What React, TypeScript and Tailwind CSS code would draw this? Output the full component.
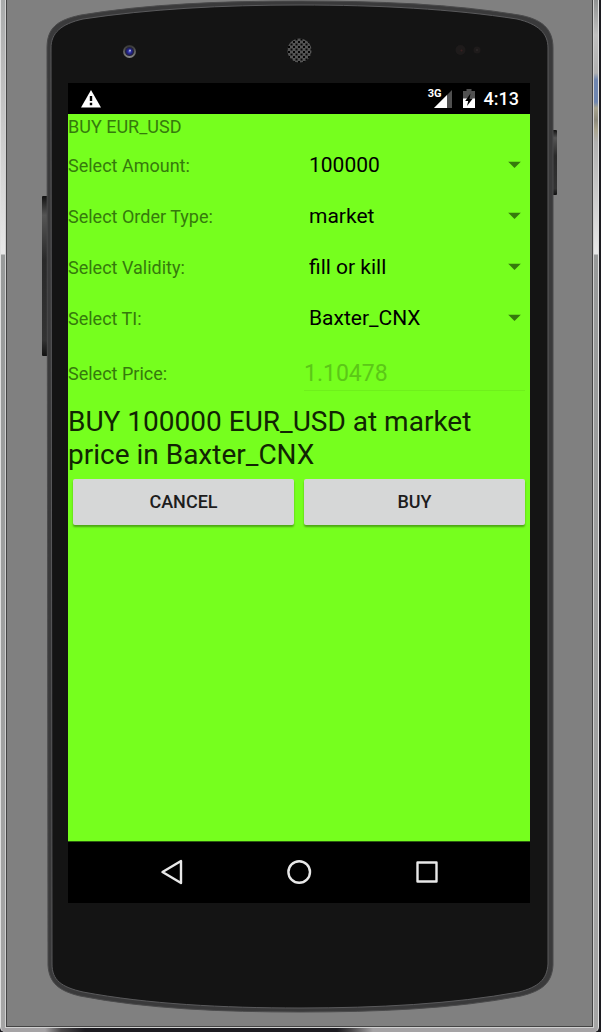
import React from "react";

const body =
  "M0 48 C0 28 10 20 34 15 C100 4 175 1 253 1 C331 1 406 4 472 15 C494 19 506 28 506 48 L506 965 C505 983 495 991 474 996 C406 1009 330 1012 253 1012 C176 1012 100 1009 33 996 C12 991 2 983 1 965 Z";
const face =
  "M4 48 C4 33 14 24 36 19 C102 9 175 5 253 5 C331 5 406 9 470 19 C491 24 501 33 501 48 L501 964 C500 980 491 987 472 992 C406 1004 330 1008 253 1008 C176 1008 100 1004 36 992 C14 987 5 980 5 964 Z";

function Shell() {
  return (
    <svg
      className="pointer-events-none absolute inset-0 h-full w-full overflow-visible"
      viewBox="0 0 505 1012"
      preserveAspectRatio="none"
      aria-hidden="true"
    >
      <defs>
        <linearGradient id="key" x1="0" y1="0" x2="0" y2="1">
          <stop offset="0" stopColor="#111" />
          <stop offset="0.12" stopColor="#555" />
          <stop offset="0.4" stopColor="#292929" />
          <stop offset="0.9" stopColor="#333" />
          <stop offset="1" stopColor="#111" />
        </linearGradient>
        <linearGradient id="lens" x1="0" y1="0" x2="0" y2="1">
          <stop offset="0" stopColor="#333" />
          <stop offset="1" stopColor="#8a8a8a" />
        </linearGradient>
        <radialGradient id="glass">
          <stop offset="0" stopColor="#5a64c8" />
          <stop offset="0.5" stopColor="#20208a" />
          <stop offset="1" stopColor="#222228" />
        </radialGradient>
        <pattern id="mesh" x="1" y="1" width="5" height="5" patternUnits="userSpaceOnUse">
          <rect width="5" height="5" fill="#555" />
          <rect x="0" y="0" width="2" height="2" fill="#050505" />
          <rect x="2.5" y="2.5" width="2" height="2" fill="#050505" />
        </pattern>
      </defs>
      <rect x="-5" y="196" width="6" height="160" rx="1" fill="url(#key)" />
      <rect x="504" y="130" width="6" height="65" rx="1" fill="url(#key)" />
      <path d={body} fill="#3a3a3b" stroke="#4b4b4c" />
      <path d={face} fill="#141414" stroke="#5a5a5c" />
      <circle cx="82.5" cy="51.5" r="6.5" fill="url(#lens)" />
      <circle cx="82.5" cy="51.5" r="4.6" fill="url(#glass)" />
      <circle cx="83" cy="50.5" r="1" fill="#b0b8e0" />
      <circle cx="252.5" cy="50.5" r="12" fill="url(#mesh)" />
      <circle cx="413.5" cy="50" r="5" fill="#1e1b1b" />
      <circle cx="414.5" cy="50.5" r="1" fill="#3b2020" />
      <circle cx="430" cy="50" r="3.5" fill="#1e1b1b" />
      <circle cx="430" cy="50" r="1" fill="#2c2828" />
    </svg>
  );
}

function StatusBar() {
  return (
    <header className="flex h-[31px] items-center bg-black pr-[11px] pl-[13px] text-white">
      <svg width="20" height="18" viewBox="0 0 20 18" aria-label="Warning">
        <path d="M10 0 L20 17.5 H0 Z" fill="#fff" />
        <path d="M8.8 6h2.4v5H8.8zM8.8 12.8h2.4v2.4H8.8z" fill="#000" />
      </svg>
      <div className="ml-auto flex items-center">
        <span className="-mr-[8px] self-start text-[11px] leading-[14px] font-bold">3G</span>
        <svg width="18" height="18" viewBox="0 0 18 18" aria-label="Signal">
          <path d="M18 0 V18 H0 Z" fill="#505050" />
          <path d="M13 5 V18 H0 Z" fill="#fff" />
        </svg>
        <svg className="ml-[11px]" width="12" height="19" viewBox="0 0 12 19" aria-label="Battery">
          <path d="M3.5 0 h5 v2 H12 V19 H0 V2 H3.5 Z" fill="#505050" />
          <path d="M0 9.5 H12 V19 H0 Z" fill="#fff" />
          <path d="M7.5 4.5 L2.2 12 H5.2 L4 17 L9.8 9.5 H6.6 Z" fill="#000" />
        </svg>
        <span className="ml-[9px] text-[18px] leading-[24px] font-medium">4:13</span>
      </div>
    </header>
  );
}

function SelectRow({ id, label, value }: { id: string; label: string; value: string }) {
  return (
    <div className="grid h-[51px] grid-cols-2 items-center">
      <label htmlFor={id} className="pt-[2px] text-[18px] leading-[24px] text-[#357a0c]">
        {label}
      </label>
      <div className="relative">
        <select
          id={id}
          defaultValue={value}
          className="block h-[51px] w-full appearance-none bg-transparent pr-[32px] pl-[10px] text-[21px] leading-[28px] text-black"
        >
          <option value={value}>{value}</option>
        </select>
        <svg
          className="pointer-events-none absolute top-1/2 right-[9px] -translate-y-1/2"
          width="13"
          height="7"
          viewBox="0 0 13 7"
          aria-hidden="true"
        >
          <path d="M0 0 H13 L6.5 6.5 Z" fill="#357a0c" />
        </svg>
      </div>
    </div>
  );
}

const rows = [
  { id: "amount", label: "Select Amount:", value: "100000" },
  { id: "order-type", label: "Select Order Type:", value: "market" },
  { id: "validity", label: "Select Validity:", value: "fill or kill" },
  { id: "ti", label: "Select TI:", value: "Baxter_CNX" },
];

const buttonClass =
  "h-[46px] flex-1 rounded-[2px] bg-[#d6d7d7] text-[18px] leading-[24px] font-medium text-[#1d1d1d] shadow-[0_2px_2px_rgba(0,0,0,0.35)]";

function OrderForm() {
  return (
    <form className="flex flex-1 flex-col bg-[#76ff1e]" onSubmit={(e) => e.preventDefault()}>
      <h1 className="h-[25px] pt-[1px] text-[18px] leading-[24px] text-[#357a0c]">BUY EUR_USD</h1>
      {rows.map((r) => (
        <SelectRow key={r.id} {...r} />
      ))}
      <div className="grid h-[62px] grid-cols-2 items-center">
        <label htmlFor="price" className="text-[18px] leading-[24px] text-[#357a0c]">
          Select Price:
        </label>
        <div className="px-[5px]">
          <input
            id="price"
            placeholder="1.10478"
            className="block h-[34px] w-full border-b border-[#6ff01c] bg-transparent text-[23px] leading-[28px] text-black outline-none placeholder:text-[#5bc817] placeholder:opacity-100"
          />
        </div>
      </div>
      <p className="text-[28px] leading-[33px] text-[#112503]">
        BUY 100000 EUR_USD at market price in Baxter_CNX
      </p>
      <div className="flex gap-[10px] px-[5px] pt-[8px]">
        <button type="button" className={buttonClass}>
          CANCEL
        </button>
        <button type="submit" className={buttonClass}>
          BUY
        </button>
      </div>
    </form>
  );
}

function NavBar() {
  return (
    <nav className="flex h-[62px] items-center justify-center gap-[103px] border-t border-[#2c5c10] bg-black pb-[2px]">
      <button type="button" aria-label="Back">
        <svg width="25" height="26" viewBox="0 0 25 26" fill="none" stroke="#e8e8e8" strokeWidth="2.4" strokeLinejoin="round">
          <path d="M22 2 V24 L3.5 13 Z" />
        </svg>
      </button>
      <button type="button" aria-label="Home">
        <svg width="25" height="26" viewBox="0 0 25 26" fill="none" stroke="#e8e8e8" strokeWidth="2.4">
          <circle cx="12.2" cy="13" r="10.8" />
        </svg>
      </button>
      <button type="button" aria-label="Overview">
        <svg width="25" height="26" viewBox="0 0 25 26" fill="none" stroke="#e8e8e8" strokeWidth="2.4" strokeLinejoin="round">
          <rect x="2.5" y="3.5" width="19" height="19" />
        </svg>
      </button>
    </nav>
  );
}

export default function App() {
  return (
    <div className="flex min-h-screen bg-[#1c1b20] pr-[2px] font-['Roboto',sans-serif]">
      <div className="flex flex-1 rounded-b-[5px] border-x border-[#e0e0e0] bg-[linear-gradient(to_right,#a5a3a5_0,#a5a3a5_44px,#4a484a_60px,#1c1b20_84px,#1c1b20_336px,#4a484a_350px,#a5a3a5_372px,#a5a3a5_100%),linear-gradient(to_bottom,#909292_0,#c0c0c0_35px,#b0b0b0_73px,#6f86b0_80px,#6f86b0_102px,#a8a48e_108px,#8d8a7c_120px,#aaa58f_130px,#b0b0b0_142px,#e8e8e8_254px,#989a9a_255px),linear-gradient(to_bottom,#a8aaaa_0,#b8b8b8_60px,#e8e8e8_254px,#989a9a_255px,#a5a5a5_100%)] bg-[length:100%_4px,4px_256px,100%_100%] bg-[position:left_bottom,right_top,left_top] bg-no-repeat px-[4px] pb-[4px]">
        <div className="flex flex-1 border-x border-b border-[#d0d0d0]">
          <div className="flex flex-1 border-x border-b border-[#444] bg-[#808080] px-[40px] pb-[14px]">
            <div className="relative flex flex-1 flex-col pt-[83px] pr-[22px] pb-[109px] pl-[21px]">
              <Shell />
              <main className="relative flex flex-1 flex-col">
                <StatusBar />
                <OrderForm />
                <NavBar />
              </main>
            </div>
          </div>
        </div>
      </div>
    </div>
  );
}
